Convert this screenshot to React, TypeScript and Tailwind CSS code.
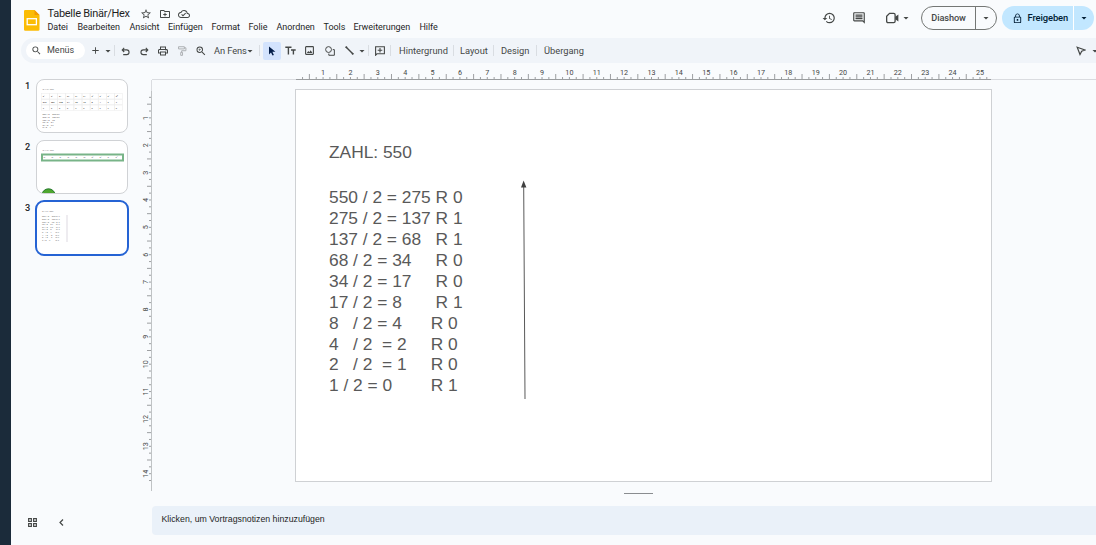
import React from "react";
import {
  MdStarBorder, MdOutlineCloudDone, MdHistory, MdOutlineComment,
  MdLockOutline, MdArrowDropDown, MdSearch, MdAdd, MdOutlinePrint, MdZoomIn,
} from "react-icons/md";

const UNIT = 27.37;

const menus = [
  { label: "Datei", cls: "w-[30px]" },
  { label: "Bearbeiten", cls: "w-[52px]" },
  { label: "Ansicht", cls: "w-[38.5px]" },
  { label: "Einfügen", cls: "w-[43.5px]" },
  { label: "Format", cls: "w-[37px]" },
  { label: "Folie", cls: "w-[28px]" },
  { label: "Anordnen", cls: "w-[47px]" },
  { label: "Tools", cls: "w-[30px]" },
  { label: "Erweiterungen", cls: "w-[66px]" },
  { label: "Hilfe", cls: "w-[30px]" },
];

const rows = [
  "550 / 2 = 275 R 0",
  "275 / 2 = 137 R 1",
  "137 / 2 = 68   R 1",
  "68 / 2 = 34     R 0",
  "34 / 2 = 17     R 0",
  "17 / 2 = 8       R 1",
  "8   / 2 = 4      R 0",
  "4   / 2  = 2     R 0",
  "2   / 2  = 1     R 0",
  "1 / 2 = 0        R 1",
];

function Slot({ className, children }: { className: string; children?: React.ReactNode }) {
  return <div className={`flex h-full shrink-0 items-center justify-center ${className}`}>{children}</div>;
}

function Sep({ className }: { className: string }) {
  return (
    <Slot className={className}>
      <div className="h-[11px] w-px bg-[#d9dde2]" />
    </Slot>
  );
}

function Caret({ className }: { className: string }) {
  return (
    <Slot className={className}>
      <MdArrowDropDown className="size-[12px] shrink-0" />
    </Slot>
  );
}

function Header() {
  return (
    <header className="flex h-[38px] shrink-0 text-[#444746]">
      <svg className="mt-[9.5px] ml-[12.5px] h-[21px] w-4 shrink-0" viewBox="0 0 16 21">
        <path d="M1.3 0H10.5L15.5 5V19.5a1.3 1.3 0 0 1-1.3 1.3H1.3A1.3 1.3 0 0 1 0 19.5V1.3A1.3 1.3 0 0 1 1.3 0Z" fill="#fbbc04" />
        <path d="M10.5 0L15.5 5H10.5Z" fill="#f29900" />
        <rect x="3.2" y="8.7" width="9.2" height="6" fill="none" stroke="#fff" strokeWidth="1.3" />
      </svg>
      <div className="ml-[8px] flex flex-col pt-[6px]">
        <div className="flex h-[15px] items-center">
          <span className="w-[92px] text-[11px] leading-[15px] tracking-[-0.27px] whitespace-nowrap text-[#1f1f1f]">Tabelle Binär/Hex</span>
          <MdStarBorder className="size-[12px]" />
          <svg className="ml-[7px] size-[12px]" viewBox="0 0 24 24" fill="currentColor">
            <path d="M20 6h-8l-2-2H4c-1.1 0-2 .9-2 2v12c0 1.1.9 2 2 2h16c1.1 0 2-.9 2-2V8c0-1.1-.9-2-2-2Zm0 12H4V6h5.2l2 2H20v10Zm-9-1.5h2v-2.5h2.5v-2h-2.5v-2.5h-2v2.5h-2.5v2h2.5Z" />
          </svg>
          <MdOutlineCloudDone className="ml-[7px] size-[12px]" />
        </div>
        <nav className="flex h-[13px] items-center text-[9px] leading-[13px] tracking-[-0.06px] text-[#1f1f1f]">
          {menus.map((m) => (
            <span key={m.label} className={`shrink-0 whitespace-nowrap ${m.cls}`}>{m.label}</span>
          ))}
        </nav>
      </div>
      <div className="mt-[6px] mr-[2px] ml-auto flex h-6 items-center">
        <MdHistory className="mr-[15.5px] size-[14px]" />
        <MdOutlineComment className="mr-[20px] size-[14px]" />
        <svg className="mr-[1.5px] h-[12px] w-[13px]" viewBox="0 0 14 12">
          <path d="M3.8 1H8.3Q9.8 1 9.8 2.5V9.5Q9.8 11 8.3 11H2.2Q.7 11 .7 9.5V4.1Z" fill="none" stroke="currentColor" strokeWidth="1.4" />
          <path d="M10 4.7L13.3 2.2V9.8L10 7.3Z" fill="currentColor" />
        </svg>
        <MdArrowDropDown className="mr-[9px] size-[12px]" />
        <div className="mr-[5px] flex h-6 w-[76px] items-center rounded-full border border-[#747775] text-[9.2px] font-medium tracking-[-0.1px]">
          <span className="flex h-full w-[54px] items-center justify-center border-r border-[#747775]">Diashow</span>
          <Caret className="w-[20px]" />
        </div>
        <div className="flex h-6 w-[92px] items-center rounded-full bg-[#c2e7ff] text-[9.4px] font-medium tracking-[-0.1px] text-[#001d35]">
          <div className="flex h-full w-[72px] items-center border-r border-white pl-[10px]">
            <MdLockOutline className="size-[11px]" />
            <span className="ml-[4.5px] whitespace-nowrap">Freigeben</span>
          </div>
          <Caret className="w-[19px]" />
        </div>
      </div>
    </header>
  );
}

function Toolbar() {
  return (
    <div className="ml-[10px] flex h-[25px] shrink-0 items-center overflow-hidden rounded-l-full bg-[#f0f4f9] text-[9.3px] leading-[13px] text-[#444746]">
      <div className="ml-[5px] flex h-[17px] w-[59px] shrink-0 items-center rounded-full bg-white pl-[5px]">
        <MdSearch className="size-[11px]" />
        <span className="ml-[5px] text-[9px]">Menüs</span>
      </div>
      <Slot className="ml-[2px] w-[16px]"><MdAdd className="size-[11px]" /></Slot>
      <Caret className="w-[10px]" />
      <Sep className="w-[3px]" />
      <Slot className="w-[19px]">
        <svg className="mt-px size-[9px]" viewBox="0 0 9 9" fill="none" stroke="currentColor" strokeWidth="1.1">
          <path d="M3.2.8L1.2 2.9L3.2 5M1.4 2.9H5.7a2.3 2.3 0 0 1 0 4.7H2.2" />
        </svg>
      </Slot>
      <Slot className="w-[18px]">
        <svg className="mt-px size-[9px]" viewBox="0 0 9 9" fill="none" stroke="currentColor" strokeWidth="1.1">
          <path d="M5.8.8L7.8 2.9L5.8 5M7.6 2.9H3.3a2.3 2.3 0 0 0 0 4.7H6.8" />
        </svg>
      </Slot>
      <Slot className="w-[20px]"><MdOutlinePrint className="size-[12px]" /></Slot>
      <Slot className="w-[18px] text-[#aeb1b4]">
        <svg className="size-[10px]" viewBox="0 0 10 11" fill="none" stroke="currentColor" strokeWidth="1.1">
          <path d="M1.2.8H7.6V3.2H1.2ZM7.6 2H9.3V5.2H4.6V7M3.6 7H5.6V10.3H3.6Z" />
        </svg>
      </Slot>
      <Slot className="w-[20px]"><MdZoomIn className="size-[12px]" /></Slot>
      <span className="w-[34px] shrink-0 pl-[3px] tracking-[-0.1px] whitespace-nowrap">An Fens</span>
      <Caret className="w-[10px]" />
      <Sep className="w-[8px]" />
      <div className="flex h-[18px] w-[18px] shrink-0 items-center justify-center rounded-[2px] bg-[#d3e3fd] text-[#041e49]">
        <svg className="h-[10px] w-[8px]" viewBox="0 0 8 10">
          <path d="M1 .6V8.5L3 6.4L4.5 9.6L5.9 8.9L4.4 5.8H7.4Z" fill="currentColor" />
        </svg>
      </div>
      <Slot className="w-[18px]">
        <svg className="h-[9px] w-[11px]" viewBox="0 0 11 9" fill="none" stroke="currentColor" strokeWidth="1.4">
          <path d="M.3 1.2H6.5M3.4 1.2V8.5M6 4H10.7M8.4 4V8.5" />
        </svg>
      </Slot>
      <Slot className="w-[21px]">
        <svg className="size-[9px]" viewBox="0 0 9 9">
          <rect x=".6" y=".6" width="7.8" height="7.8" rx=".6" fill="none" stroke="currentColor" strokeWidth="1.1" />
          <path d="M1.8 6.9L3.3 5L4.3 6.2L5.7 4.3L7.4 6.9Z" fill="currentColor" />
        </svg>
      </Slot>
      <Slot className="w-[20px]">
        <svg className="size-[10px]" viewBox="0 0 11 11" fill="none" stroke="currentColor" strokeWidth="1.1">
          <circle cx="3.9" cy="3.9" r="3.2" />
          <path d="M8.5 4H10.3V10.2H4.2V8.3" />
        </svg>
      </Slot>
      <Slot className="w-[18px]">
        <svg className="size-[9px]" viewBox="0 0 9 9">
          <path d="M1 1L8 8" stroke="currentColor" strokeWidth="1.4" />
          <circle cx="1.3" cy="1.3" r="1" fill="currentColor" /><circle cx="7.7" cy="7.7" r="1" fill="currentColor" />
        </svg>
      </Slot>
      <Caret className="w-[8px]" />
      <Sep className="w-[4px]" />
      <Slot className="w-[19px]">
        <svg className="size-[10px]" viewBox="0 0 10 10" fill="none" stroke="currentColor" strokeWidth="1.1">
          <path d="M.6 9.2V.8H9.4V7.8H2ZM5 2V6.5M2.7 4.3H7.3" />
        </svg>
      </Slot>
      <Sep className="w-[3px]" />
      <span className="w-[60px] shrink-0 pl-[7px]">Hintergrund</span>
      <Sep className="w-[3px]" />
      <span className="w-[37px] shrink-0 pl-[5px]">Layout</span>
      <Sep className="w-[3px]" />
      <span className="w-[40px] shrink-0 pl-[6px]">Design</span>
      <Sep className="w-[3px]" />
      <span className="shrink-0 pl-[6px]">Übergang</span>
      <Slot className="mr-[3px] ml-auto w-[10px]">
        <svg className="size-[10px]" viewBox="0 0 10 10" fill="none" stroke="currentColor" strokeWidth="1.2">
          <path d="M1.2 1.2L9 4L5.7 5.2L4 8.5Z" />
        </svg>
      </Slot>
      <Caret className="mr-[-4px] w-[11px]" />
    </div>
  );
}

const powers = ["2⁹", "2⁸", "2⁷", "2⁶", "2⁵", "2⁴", "2³", "2²", "2¹", "2⁰"];
const tableRows = [powers, ["512", "256", "128", "64", "32", "16", "8", "4", "2", "1"], ["1", "0", "0", "0", "1", "0", "0", "1", "1", "0"]];

function Thumb({ n, children }: { n: number; children: React.ReactNode }) {
  const active = n === 3;
  return (
    <div className="flex h-[61px]">
      <span className="w-[25px] pl-[14px] text-[9.2px] leading-[13px] font-medium text-[#202124]">{n}</span>
      <div className={active ? "mt-[-1px] ml-[-1px] h-[56px] w-[94px] overflow-hidden rounded-[9px] border-2 border-[#2563d4] bg-white" : "h-[54px] w-[92px] overflow-hidden rounded-[8px] border border-[#d0d2d5] bg-white"}>
        {children}
      </div>
    </div>
  );
}

function Filmstrip() {
  return (
    <aside className="flex w-[141px] shrink-0 flex-col">
      <div className="flex flex-col pt-[16px]">
        <Thumb n={1}>
          <svg className="h-[52px] w-[90px]" viewBox="0 0 90 52" fontFamily="Liberation Sans" fill="#555">
            <text x="5.5" y="10.3" fontSize="2.4" fill="#777">ZAHL: 550</text>
            {tableRows.map((r, j) => (
              <g key={j}>
                {r.map((t, i) => (
                  <g key={i}>
                    <rect x={4.5 + i * 8.1} y={13.3 + j * 5.8} width="8.1" height="5.8" fill="none" stroke="#ececec" strokeWidth=".5" />
                    <text x={5.8 + i * 8.1} y={16.9 + j * 5.8} fontSize="2.2" fontWeight="bold">{t}</text>
                  </g>
                ))}
              </g>
            ))}
            {["550 / 2 = 275 R0", "275 / 2 = 137 R1", "137 / 2 = 68", "68 / 2 = 34", "34 / 2 = 17", "8 / 2 = 4"].map((t, i) => (
              <text key={t} x="5.5" y={35.3 + i * 2.6} fontSize="2.3">{t}</text>
            ))}
          </svg>
        </Thumb>
        <Thumb n={2}>
          <svg className="h-[52px] w-[90px]" viewBox="0 0 90 52" fontFamily="Liberation Sans" fill="#555">
            <text x="5.5" y="10" fontSize="2.4" fill="#777">ZAHL: 550</text>
            <rect x="5" y="13.5" width="81" height="6" fill="white" stroke="#78b488" strokeWidth="2" />
            {powers.map((t, i) => <text key={i} x={6.5 + i * 8} y="16.7" fontSize="2.2">{t}</text>)}
            <circle cx="11.5" cy="54.5" r="6.7" fill="#4ea72e" stroke="#24772b" />
          </svg>
        </Thumb>
        <Thumb n={3}>
          <svg className="h-[52px] w-[90px]" viewBox="0 0 90 52" fontFamily="Liberation Sans" fill="#666">
            <text x="5" y="9.5" fontSize="2.4" fill="#777">ZAHL: 550</text>
            {rows.map((t, i) => <text key={i} x="5" y={15.3 + i * 2.62} fontSize="2.3" className="whitespace-pre">{t}</text>)}
            <path d="M30 13V40" stroke="#c6bfcd" strokeWidth=".6" />
          </svg>
        </Thumb>
      </div>
      <div className="mt-auto mb-[16px] flex h-[13px] items-center pl-[17px] text-[#444746]">
        <svg className="size-[9px]" viewBox="0 0 9 9" fill="none" stroke="currentColor" strokeWidth="1.1">
          <path d="M.6.6H3.4V3.4H.6ZM5.6.6H8.4V3.4H5.6ZM.6 5.6H3.4V8.4H.6ZM5.6 5.6H8.4V8.4H5.6Z" />
        </svg>
        <svg className="ml-[22px] h-[7px] w-[5px]" viewBox="0 0 5 7" fill="none" stroke="currentColor" strokeWidth="1.2">
          <path d="M4 .5L1 3.5L4 6.5" />
        </svg>
      </div>
    </aside>
  );
}

function ticks(count: number) {
  return Array.from({ length: count }, (_, i) => i + 1);
}

function HorizontalRuler() {
  return (
    <svg className="h-[17px] w-[944px] shrink-0" viewBox="0 0 944 17" fontFamily="Roboto" fontSize="7.2" fill="#444746">
      <path d="M-1 16.5H944" stroke="#dadce0" />
      <path d="M144 16.5H839" stroke="#9a9d9f" />
      {ticks(101).map((i) => (
        <path key={i} d={`M${143.7 + (i * UNIT) / 4} ${i % 4 === 2 ? 11 : 14}V16`} stroke="#85888a" strokeWidth=".8" />
      ))}
      {ticks(25).map((n) => (
        <text key={n} x={143.7 + n * UNIT} y="12.3" textAnchor="middle">{n}</text>
      ))}
    </svg>
  );
}

function VerticalRuler() {
  return (
    <svg className="ml-[-13px] h-[411px] w-[13px] shrink-0" viewBox="0 0 13 411" fontFamily="Roboto" fontSize="7.2" fill="#444746">
      <path d="M12.5 0V11" stroke="#dadce0" />
      <path d="M12.5 11V411" stroke="#c0c3c5" />
      {ticks(57).map((i) => (
        <path key={i} d={`M${i % 4 === 2 ? 8 : 10} ${10.5 + (i * UNIT) / 4}H12`} stroke="#85888a" strokeWidth=".8" />
      ))}
      {ticks(14).map((n) => (
        <text key={n} transform={`translate(9 ${10.5 + n * UNIT}) rotate(-90)`} textAnchor="middle">{n}</text>
      ))}
    </svg>
  );
}

function Slide() {
  return (
    <div className="mt-[9px] ml-[143px] flex h-[393px] w-[697px] border border-[#cfd1d4] bg-white">
      <div className="w-[190px] shrink-0 pt-[52px] pl-[33px] text-[17.35px] leading-[20.87px] whitespace-pre text-[#595959]">
        <div>ZAHL: 550</div>
        <div className="mt-[24.6px]">
          {rows.map((r) => <div key={r}>{r}</div>)}
        </div>
      </div>
      <svg className="mt-[90px] ml-[32px] h-[220px] w-[12px]" viewBox="0 0 12 220">
        <path d="M5.7 6L7 219" stroke="#595959" strokeWidth="1" />
        <path d="M5.6 .5L8.4 7.5H3Z" fill="#404040" />
      </svg>
    </div>
  );
}

export default function App() {
  return (
    <div className="flex h-[545px] w-[1096px] overflow-hidden bg-[#f9fbfd] font-['Roboto','Liberation_Sans',sans-serif]">
      <div className="w-[11px] shrink-0 bg-[#1b2b3a]" />
      <div className="flex min-w-0 flex-1 flex-col">
        <Header />
        <Toolbar />
        <div className="flex min-h-0 flex-1">
          <Filmstrip />
          <main className="flex min-w-0 flex-1 flex-col font-['Liberation_Sans',sans-serif]">
            <HorizontalRuler />
            <div className="flex h-[411px] shrink-0">
              <VerticalRuler />
              <Slide />
            </div>
            <div className="mt-[2px] ml-[472px] h-px w-[28.5px] bg-[#8a8d90]" />
            <div className="mt-[12px] h-[29px] shrink-0 rounded-l-[4px] bg-[#eaf1f9] pl-[9.5px] text-[8.78px] leading-[27px] text-[#1f1f1f]">
              Klicken, um Vortragsnotizen hinzuzufügen
            </div>
          </main>
        </div>
      </div>
    </div>
  );
}
